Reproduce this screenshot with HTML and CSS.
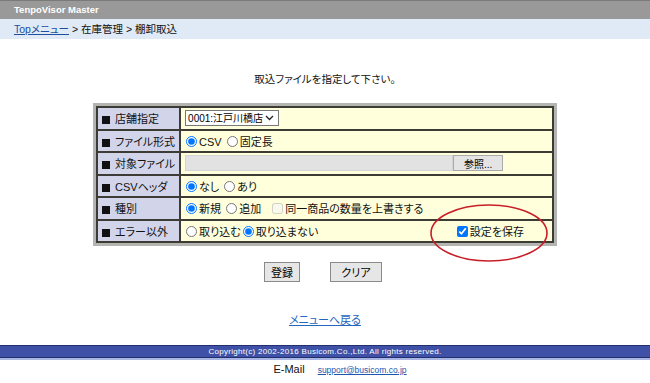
FILE: index.html
```html
<!DOCTYPE html>
<html lang="ja">
<head>
  <meta charset="UTF-8">
  <title>TenpoVisor Master</title>
  <link rel="stylesheet" href="styles.css">
</head>
<body>
  <div class="header">TenpoVisor Master</div>
  <div class="crumbs"><a href="#">Topメニュー</a> &gt; 在庫管理 &gt; 棚卸取込</div>

  <div class="main">
    <p class="title">取込ファイルを指定して下さい。</p>

    <div class="frame">
      <table class="form">
        <tr>
          <td class="label"><span class="sq"></span>店舗指定</td>
          <td class="value">
            <span class="select">
              <select class="shop">
                <option>0001:江戸川橋店</option>
              </select>
              <svg class="chev" width="9" height="6" viewBox="0 0 9 6"><path d="M1 1 L4.5 4.5 L8 1" fill="none" stroke="#222" stroke-width="1.3"/></svg>
            </span>
          </td>
        </tr>
        <tr>
          <td class="label"><span class="sq"></span>ファイル形式</td>
          <td class="value">
            <label><input type="radio" name="fmt" checked>CSV</label>
            <label><input type="radio" name="fmt">固定長</label>
          </td>
        </tr>
        <tr>
          <td class="label"><span class="sq"></span>対象ファイル</td>
          <td class="value">
            <div class="file"><span class="file-path"></span><button class="browse">参照...</button></div>
          </td>
        </tr>
        <tr>
          <td class="label"><span class="sq"></span>CSVヘッダ</td>
          <td class="value">
            <label><input type="radio" name="head" checked>なし</label>
            <label><input type="radio" name="head">あり</label>
          </td>
        </tr>
        <tr>
          <td class="label"><span class="sq"></span>種別</td>
          <td class="value">
            <label><input type="radio" name="kind" checked>新規</label>
            <label><input type="radio" name="kind">追加</label>
            <label class="overwrite"><input type="checkbox" disabled>同一商品の数量を上書きする</label>
          </td>
        </tr>
        <tr>
          <td class="label"><span class="sq"></span>エラー以外</td>
          <td class="value">
            <div class="row">
              <label><input type="radio" name="err">取り込む</label>
              <label><input type="radio" name="err" checked>取り込まない</label>
              <label class="save"><input type="checkbox" checked>設定を保存</label>
            </div>
          </td>
        </tr>
      </table>
    </div>

    <div class="actions">
      <button class="btn">登録</button>
      <button class="btn btn-wide">クリア</button>
    </div>

    <a class="back" href="#">メニューへ戻る</a>
  </div>

  <div class="footer">Copyright(c) 2002-2016 Busicom.Co.,Ltd. All rights reserved.</div>
  <div class="mail">E-Mail <a href="#">support@busicom.co.jp</a></div>

  <!-- annotation circle -->
  <svg class="mark" width="122" height="62" viewBox="0 0 122 62">
    <ellipse cx="61" cy="31" rx="58" ry="28" fill="none" stroke="#c81e28" stroke-width="1.6"/>
  </svg>
</body>
</html>
```

FILE: styles.css
```css
body {
  margin: 0;
  font-family: "Liberation Sans", "Noto Sans CJK JP", sans-serif;
  font-size: 11px;
  font-feature-settings: "palt";
  color: #111;
  background: #fff;
  position: relative;
  height: 383px;
  overflow: hidden;
}
a {
  color: #1d56b0;
}
.header {
  height: 18px;
  line-height: 17px;
  background: #999;
  border-top: 1px solid #7a7a7a;
  color: #fff;
  font-weight: bold;
  font-size: 9.5px;
  padding-left: 14px;
}
.crumbs {
  height: 20px;
  line-height: 20px;
  background: #dfeaf6;
  padding-left: 14px;
  font-size: 10.5px;
}
.crumbs a {
  color: #1d4fa0;
}
.main {
  text-align: center;
}
.title {
  margin: 33px 0 16px;
  line-height: 15px;
  font-size: 10.5px;
}
.frame {
  width: 458px;
  margin: 0 auto;
  border: 3px solid #b4b4b0;
  text-align: left;
}
.form {
  width: 100%;
  border-collapse: collapse;
}
.form td {
  border: 2px solid #3c3c34;
  height: 20.5px;
  padding: 0 4px;
  white-space: nowrap;
}
.label {
  width: 73px;
  background: #d2d4ea;
}
.sq {
  display: inline-block;
  width: 8px;
  height: 8px;
  background: #111;
  margin-right: 5px;
  vertical-align: -1px;
}
.value {
  background: #ffffdc;
}
.value label {
  margin-right: 1px;
}
input[type="radio"], input[type="checkbox"] {
  width: 11px;
  height: 11px;
  margin: 0 2px 0 1px;
  vertical-align: -1px;
}
.select {
  position: relative;
  display: inline-block;
}
.shop {
  appearance: none;
  font-family: "Liberation Sans", "Noto Sans CJK JP", sans-serif;
  font-size: 10px;
  height: 16px;
  width: 94px;
  padding: 0 0 0 2px;
  border: 1px solid #777;
  background: #fff;
  border-radius: 0;
  vertical-align: middle;
}
.chev {
  position: absolute;
  right: 5px;
  top: 5px;
}
.file {
  display: flex;
  align-items: center;
}
.file-path {
  display: inline-block;
  width: 266px;
  height: 14px;
  background: #e2e2e2;
  border: 1px solid #d4d4d4;
}
.browse {
  width: 50px;
  height: 16px;
  font-size: 10px;
  padding: 0;
  background: #e4e4e4;
  border: 1px solid #aaa;
  font-family: "Liberation Sans", "Noto Sans CJK JP", sans-serif;
}
.overwrite {
  margin-left: 6px;
}
.row {
  display: flex;
  align-items: center;
}
.save {
  margin-left: auto;
  margin-right: 24px !important;
}
.actions {
  display: flex;
  justify-content: center;
  gap: 30px;
  margin-top: 16px;
  padding-right: 4px;
}
.btn {
  width: 36px;
  height: 20px;
  padding: 0;
  font-size: 11px;
  font-family: "Liberation Sans", "Noto Sans CJK JP", sans-serif;
  font-feature-settings: "palt";
  background: #e6e6e6;
  border: 1px solid #8a8a8a;
}
.btn-wide {
  width: 52px;
}
.back {
  display: inline-block;
  margin-top: 31px;
  color: #2466c0;
  line-height: 14px;
}
.footer {
  margin-top: 18px;
  height: 11px;
  line-height: 11px;
  background: #3e51a6;
  border-top: 1px solid #23306e;
  border-bottom: 1px solid #23306e;
  box-shadow: 0 2px 0 #a9b6e4;
  color: #fff;
  font-size: 8px;
  text-align: center;
  letter-spacing: 0.3px;
}
.mail {
  margin-top: 5px;
  text-align: center;
  font-size: 11px;
  padding-left: 30px;
}
.mail a {
  margin-left: 10px;
  font-size: 8.5px;
}
.mark {
  position: absolute;
  left: 428px;
  top: 202px;
}
```
